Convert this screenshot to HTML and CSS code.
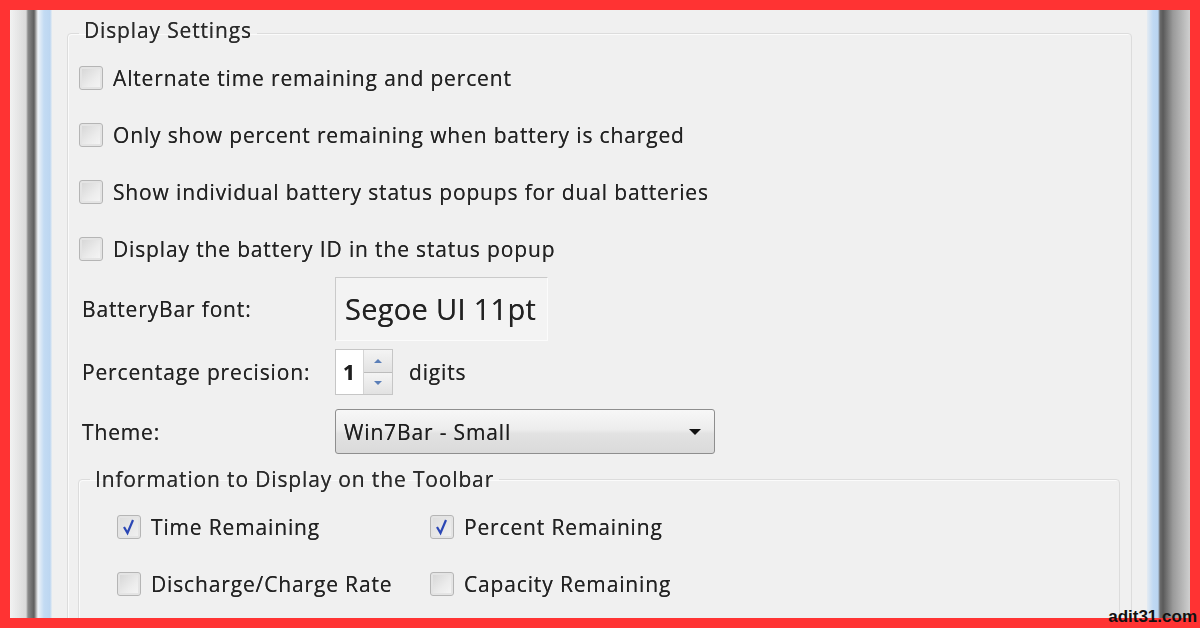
FILE: index.html
```html
<!DOCTYPE html>
<html lang="en">

<head>
  <meta charset="UTF-8">
  <meta name="viewport" content="width=device-width, initial-scale=1.0">
  <title>BatteryBar options</title>
  <link rel="stylesheet" href="styles.css">
</head>

<body>
  <div class="frame">
    <div class="window">
      <div class="chrome-left"></div>

      <div class="panel">
        <fieldset class="group">
          <legend class="group-title raised">Display Settings</legend>

          <label class="check-row"><span class="box"></span>Alternate time remaining and percent</label>
          <label class="check-row"><span class="box"></span>Only show percent remaining when battery is charged</label>
          <label class="check-row"><span class="box"></span>Show individual battery status popups for dual batteries</label>
          <label class="check-row"><span class="box"></span>Display the battery ID in the status popup</label>

          <div class="field-row font-row">
            <span class="field-label">BatteryBar font:</span>
            <div class="font-box">Segoe UI 11pt</div>
          </div>

          <div class="field-row spin-row">
            <span class="field-label">Percentage precision:</span>
            <div class="spin">
              <span class="spin-value">1</span>
              <span class="spin-btns">
                <span class="spin-btn"><svg width="10" height="6" viewBox="0 0 10 6"><path d="M1 5 L5 1 L9 5 Z" fill="#5b7fb8"/></svg></span>
                <span class="spin-btn"><svg width="10" height="6" viewBox="0 0 10 6"><path d="M1 1 L5 5 L9 1 Z" fill="#5b7fb8"/></svg></span>
              </span>
            </div>
            <span class="unit">digits</span>
          </div>

          <div class="field-row theme-row">
            <span class="field-label">Theme:</span>
            <div class="select">
              <span>Win7Bar - Small</span>
              <svg class="arrow" width="14" height="8" viewBox="0 0 14 8"><path d="M1 1 L13 1 L7 7 Z" fill="#111"/></svg>
            </div>
          </div>

          <fieldset class="group inner">
            <legend class="group-title">Information to Display on the Toolbar</legend>
            <div class="check-grid">
              <label class="check-row"><span class="box checked"><svg width="22" height="22" viewBox="0 0 22 22"><path d="M6 11 L9.5 17 L15 4" fill="none" stroke="#2b47b5" stroke-width="2.2"/></svg></span>Time Remaining</label>
              <label class="check-row"><span class="box checked"><svg width="22" height="22" viewBox="0 0 22 22"><path d="M6 11 L9.5 17 L15 4" fill="none" stroke="#2b47b5" stroke-width="2.2"/></svg></span>Percent Remaining</label>
              <label class="check-row"><span class="box"></span>Discharge/Charge Rate</label>
              <label class="check-row"><span class="box"></span>Capacity Remaining</label>
            </div>
          </fieldset>
        </fieldset>
      </div>

      <div class="chrome-right"></div>
    </div>
  </div>

  <div class="watermark">adit31.com</div>
</body>

</html>
```

FILE: styles.css
```css
body {
  margin: 0;
  background: #ff3333;
  font-family: "Open Sans", "Noto Sans", sans-serif;
  overflow: hidden;
}

.frame {
  padding: 10px 10px 0 10px;
  height: 618px;
  box-sizing: border-box;
}

.window {
  display: flex;
  height: 608px;
  overflow: hidden;
  filter: blur(0.5px);
}

.chrome-left {
  width: 42px;
  flex: none;
  background:
    linear-gradient(to right, #f2f2f2 0, #dadada 16px, #8a8a8a 18px, #5e5e5e 24px, #a9a9a9 26px, #eef3f8 28px, #c3dbf3 34px, #bcd6f1 40px, #e9eef2 42px);
}

.chrome-right {
  width: 43px;
  flex: none;
  background:
    linear-gradient(to right, #e4ebf2 0, #c0d9f3 6px, #b9d4f0 11px, #6c6c6c 13px, #5a5a5a 16px, #9a9a9a 26px, #cfcfcf 43px);
}

.panel {
  flex: 1;
  background: #f0f0f0;
  padding: 10px 15px 0 15px;
  color: #222;
  font-size: 21px;
  letter-spacing: 0.85px;
  text-shadow: 0 0 0.6px #444;
}

.group {
  margin: 0;
  padding: 3px 11px 0 11px;
  border: 1px solid #dcdcdc;
  border-radius: 4px;
  box-shadow: inset 1px 1px 0 #fbfbfb;
}

.group-title {
  padding: 0 5px;
  line-height: 26px;
  font-size: 21px;
  color: #2a2a2a;
}

/* title sits a little above the frame line */
.group-title.raised {
  line-height: 20px;
  padding-bottom: 6px;
}

.check-row {
  display: flex;
  align-items: center;
  height: 57px;
  gap: 10px;
  white-space: nowrap;
}

.box {
  width: 22px;
  height: 22px;
  flex: none;
  border: 1px solid #b5b5b5;
  border-radius: 3px;
  background: linear-gradient(135deg, #d4d4d4, #ececec 60%, #f6f6f6);
  box-shadow: inset 0 0 0 2px #e4e4e4;
  display: flex;
  align-items: center;
  justify-content: center;
}

.box.checked {
  background: linear-gradient(135deg, #dcdcdc, #f2f2f2);
}

.field-row {
  display: flex;
  align-items: center;
  padding-left: 3px;
}

.field-label {
  width: 253px;
  flex: none;
}

.font-row {
  height: 64px;
}

.font-box {
  width: 202px;
  height: 62px;
  border: 1px solid #fbfbfb;
  border-top-color: #cacaca;
  border-left-color: #cacaca;
  background: #f3f3f3;
  font-size: 29px;
  letter-spacing: 0.3px;
  line-height: 62px;
  padding-left: 9px;
  color: #222;
}

.spin-row {
  margin-top: 8px;
  height: 46px;
}

.spin {
  display: flex;
  width: 56px;
  height: 44px;
  border: 1px solid #c6c6c6;
  background: #fff;
}

.spin-value {
  width: 20px;
  padding-left: 7px;
  line-height: 44px;
  font-weight: bold;
  color: #1e1e1e;
}

.spin-btns {
  flex: 1;
  display: flex;
  flex-direction: column;
  border-left: 1px solid #d4d4d4;
}

.spin-btn {
  flex: 1;
  display: flex;
  align-items: center;
  justify-content: center;
  background: linear-gradient(#f4f4f4, #e2e2e2);
  border-bottom: 1px solid #bcbcbc;
}

.spin-btn:last-child {
  border-bottom: none;
}

.unit {
  margin-left: 16px;
}

.theme-row {
  margin-top: 14px;
  height: 45px;
}

.select {
  width: 380px;
  height: 45px;
  border: 1px solid #8e8e8e;
  border-radius: 3px;
  background: linear-gradient(#f7f7f7, #ededed 45%, #e2e2e2 55%, #dadada);
  display: flex;
  align-items: center;
  justify-content: space-between;
  padding: 0 12px 0 8px;
  box-sizing: border-box;
  color: #1e1e1e;
}

.group.inner {
  margin: 12px 0 0 -1px;
  padding: 0 11px 0 11px;
  height: 200px;
}

.check-grid {
  display: grid;
  grid-template-columns: 313px 313px;
  margin-left: 27px;
  margin-top: 6px;
}

.watermark {
  position: absolute;
  right: 3px;
  bottom: 1px;
  font-family: "Liberation Sans", Arial, sans-serif;
  font-weight: bold;
  font-size: 17px;
  line-height: 20px;
  color: #111;
}
```
